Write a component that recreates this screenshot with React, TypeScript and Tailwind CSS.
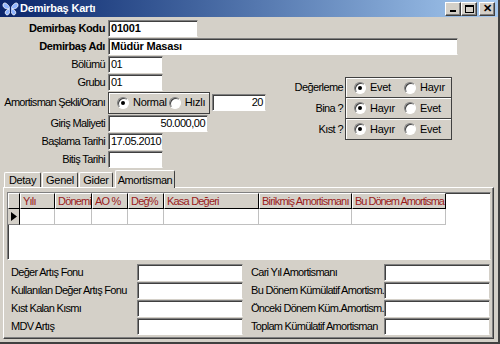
import React from "react";

// classic win2k look, all pieces are small helpers

const sunken =
  "bg-white border border-t-[#808080] border-l-[#808080] border-b-white border-r-[#d4d0c8] shadow-[inset_1px_1px_0_#404040]";

function Field({ w, bold = false, right = false, children }: {
  w: string; bold?: boolean; right?: boolean; children?: React.ReactNode;
}) {
  return (
    <div className={`${w} h-[17px] ${sunken} flex items-center px-[2px] text-[11px] leading-none text-black ${bold ? "font-bold tracking-[-0.2px]" : "tracking-[-0.5px]"} ${right ? "justify-end" : ""}`}>
      {children}
    </div>
  );
}

function Radio({ checked, label, className = "" }: { checked: boolean; label: string; className?: string }) {
  return (
    <div className={`flex items-center gap-[4px] ${className}`}>
      <span className="relative w-[12px] h-[12px] rounded-full bg-white border border-t-[#808080] border-l-[#808080] border-b-white border-r-white shadow-[inset_1px_1px_0_#404040] flex items-center justify-center">
        {checked && <span className="w-[4px] h-[4px] rounded-full bg-black" />}
      </span>
      <span className="tracking-[-0.3px]">{label}</span>
    </div>
  );
}

function WinBtn({ children }: { children: React.ReactNode }) {
  return (
    <div className="w-[16px] h-[14px] bg-[#d4d0c8] border border-t-white border-l-white border-b-[#404040] border-r-[#404040] shadow-[inset_-1px_-1px_0_#808080] flex items-center justify-center">
      {children}
    </div>
  );
}

const columns = [
  { name: "Yılı", w: "w-[35px]", t: "tracking-[-0.8px]" },
  { name: "Dönemi", w: "w-[37px]", t: "tracking-[-0.8px]" },
  { name: "AO %", w: "w-[36px]", t: "tracking-[-0.8px]" },
  { name: "Değ%", w: "w-[36px]", t: "tracking-[-0.8px]" },
  { name: "Kasa Değeri", w: "w-[95px]", t: "tracking-[-0.8px]" },
  { name: "Birikmiş Amortismanı", w: "w-[93px]", t: "tracking-[-0.8px]" },
  { name: "Bu Dönem Amortisma", w: "w-[94px]", t: "tracking-[-1px]" },
];

const tabs = [
  { name: "Detay", w: "w-[37px]" },
  { name: "Genel", w: "w-[36px]" },
  { name: "Gider", w: "w-[34px]" },
];

const leftTotals = ["Değer Artış Fonu", "Kullanılan Değer Artış Fonu", "Kıst Kalan Kısmı", "MDV Artış"];
const rightTotals = ["Cari Yıl Amortismanı", "Bu Dönem Kümülatif Amortism.", "Önceki Dönem Küm.Amortism.", "Toplam Kümülatif Amortisman"];

const choices = [
  { label: "Değerleme", a: "Evet", b: "Hayır" },
  { label: "Bina ?", a: "Hayır", b: "Evet" },
  { label: "Kıst ?", a: "Hayır", b: "Evet" },
];

export default function App() {
  return (
    <div className="w-[500px] h-[344px] bg-[#d4d0c8] font-['Liberation_Sans',Arial,sans-serif] text-[11px] text-black overflow-hidden flex flex-col border-r-2 border-b-2 border-r-[#404040] border-b-[#404040]">
      {/* title bar */}
      <div className="h-[17px] shrink-0 flex items-center pl-[2px] pr-[3px] bg-gradient-to-r from-[#0a246a] to-[#a6caf0]">
        <svg width="17" height="14" viewBox="0 0 17 14" className="shrink-0">
          <path d="M8 6 C5 0 1 0 1 3 C1 6 4 7 7 7 C3 8 2 12 5 13 C7 13 8 10 8 8 Z" fill="#8fb4ff" stroke="#ffffff" strokeWidth="0.8" />
          <path d="M9 6 C12 0 16 0 16 3 C16 6 13 7 10 7 C14 8 15 12 12 13 C10 13 9 10 9 8 Z" fill="#8fb4ff" stroke="#ffffff" strokeWidth="0.8" />
          <path d="M8.5 4 L8.5 12" stroke="#0a246a" strokeWidth="1.2" />
        </svg>
        <span className="ml-[1px] text-white font-bold text-[11px] tracking-[-0.2px]">Demirbaş Kartı</span>
        <div className="ml-auto flex items-center">
          <WinBtn><span className="block w-[6px] h-[2px] bg-black mt-[5px]" /></WinBtn>
          <WinBtn><span className="block w-[9px] h-[8px] border border-black border-t-2" /></WinBtn>
          <div className="w-[2px]" />
          <WinBtn><span className="text-[11px] font-bold leading-none">✕</span></WinBtn>
        </div>
      </div>

      {/* top form */}
      <div className="pl-[3px] mt-[2px] flex flex-col">
        <div className="h-[18px] flex items-center">
          <span className="w-[102px] text-right font-bold tracking-[-0.4px]">Demirbaş Kodu</span>
          <div className="ml-[3px]"><Field w="w-[90px]" bold>01001</Field></div>
        </div>
        <div className="h-[18px] flex items-center">
          <span className="w-[102px] text-right font-bold tracking-[-0.4px]">Demirbaş Adı</span>
          <div className="ml-[3px]"><Field w="w-[350px]" bold>Müdür Masası</Field></div>
        </div>

        <div className="flex">
          <div className="flex flex-col">
            <div className="h-[18px] flex items-center">
              <span className="w-[102px] text-right tracking-[-0.6px]">Bölümü</span>
              <div className="ml-[3px]"><Field w="w-[55px]">01</Field></div>
            </div>
            <div className="h-[18px] flex items-center">
              <span className="w-[102px] text-right tracking-[-0.6px]">Grubu</span>
              <div className="ml-[3px]"><Field w="w-[55px]">01</Field></div>
            </div>
            <div className="h-[23px] flex items-center">
              <span className="w-[102px] text-right tracking-[-0.7px] whitespace-nowrap">Amortisman Şekli/Oranı</span>
              <div className="ml-[3px] w-[102px] h-[22px] border border-[#404040] shadow-[inset_1px_1px_0_#ffffff] flex items-center pl-[8px]">
                <Radio checked label="Normal" />
                <Radio checked={false} label="Hızlı" className="ml-[2px]" />
              </div>
              <div className="ml-[2px]"><Field w="w-[54px]" right>20</Field></div>
            </div>
            <div className="h-[18px] flex items-center">
              <span className="w-[102px] text-right tracking-[-0.6px]">Giriş Maliyeti</span>
              <div className="ml-[3px]"><Field w="w-[100px]" right>50.000,00</Field></div>
            </div>
            <div className="h-[18px] flex items-center">
              <span className="w-[102px] text-right tracking-[-0.6px]">Başlama Tarihi</span>
              <div className="ml-[3px]"><Field w="w-[55px]">17.05.2010</Field></div>
            </div>
            <div className="h-[18px] flex items-center">
              <span className="w-[102px] text-right tracking-[-0.6px]">Bitiş Tarihi</span>
              <div className="ml-[3px]"><Field w="w-[55px]" /></div>
            </div>
          </div>

          {/* right radio groups */}
          <div className="ml-[23px] mt-[22px] flex flex-col">
            {choices.map((c, i) => (
              <div key={c.label} className="flex items-center h-[21px]">
                <span className="w-[56px] text-right pr-[2px] tracking-[-0.6px]">{c.label}</span>
                <div className={`w-[107px] h-[22px] border border-[#404040] shadow-[inset_1px_1px_0_#ffffff] flex items-center pl-[8px] ${i > 0 ? "-mt-px" : ""}`}>
                  <Radio checked label={c.a} className="w-[50px]" />
                  <Radio checked={false} label={c.b} />
                </div>
              </div>
            ))}
          </div>
        </div>
      </div>

      {/* tabs */}
      <div className="mt-[1px] pl-[4px] flex items-end h-[18px]">
        {tabs.map((t) => (
          <div key={t.name} className={`${t.w} h-[15px] border-t border-l border-r border-t-white border-l-white border-r-[#404040] rounded-t-[2px] flex items-center justify-center tracking-[-0.3px] mr-[1px]`}>
            {t.name}
          </div>
        ))}
        <div className="h-[18px] w-[60px] ml-[1px] border-t border-l border-r border-t-white border-l-white border-r-[#404040] rounded-t-[2px] flex items-start justify-center pt-[1px] tracking-[-0.4px] -mb-px bg-[#d4d0c8] relative z-10">
          Amortisman
        </div>
      </div>

      {/* tab panel */}
      <div className="ml-[3px] w-[491px] h-[152px] border border-t-white border-l-white border-b-[#404040] border-r-[#404040] shadow-[inset_-1px_-1px_0_#808080] pt-[4px] pl-[3px] flex flex-col">
        {/* grid */}
        <div className={`w-[484px] h-[68px] ${sunken} flex flex-col`}>
          <div className="flex h-[16px]">
            <div className="w-[12px] h-[16px] bg-[#d4d0c8] border border-t-white border-l-white border-b-[#000] border-r-[#000]" />
            {columns.map((c) => (
              <div key={c.name} className={`${c.w} ${c.t} h-[16px] bg-[#d4d0c8] border border-t-white border-l-white border-b-[#000] border-r-[#000] text-[#9a1a1a] pl-[2px] flex items-center whitespace-nowrap overflow-hidden`}>
                {c.name}
              </div>
            ))}
          </div>
          <div className="flex h-[16px]">
            <div className="w-[12px] h-[16px] bg-[#d4d0c8] border-r border-b border-r-[#000] border-b-[#808080] flex items-center justify-center">
              <svg width="6" height="9" viewBox="0 0 6 9"><path d="M0 0 L6 4.5 L0 9 Z" fill="#000" /></svg>
            </div>
            {columns.map((c) => (
              <div key={c.name} className={`${c.w} h-[16px] border-r border-b border-[#c0c0c0]`} />
            ))}
          </div>
        </div>

        {/* totals */}
        <div className="mt-[3px] flex">
          <div className="flex flex-col pl-[4px]">
            {leftTotals.map((t) => (
              <div key={t} className="h-[18px] flex items-center">
                <span className="w-[126px] tracking-[-0.7px] whitespace-nowrap">{t}</span>
                <Field w="w-[106px]" />
              </div>
            ))}
          </div>
          <div className="flex flex-col ml-[8px]">
            {rightTotals.map((t) => (
              <div key={t} className="h-[18px] flex items-center">
                <span className="w-[133px] tracking-[-0.7px] whitespace-nowrap">{t}</span>
                <Field w="w-[106px]" />
              </div>
            ))}
          </div>
        </div>
      </div>
    </div>
  );
}
